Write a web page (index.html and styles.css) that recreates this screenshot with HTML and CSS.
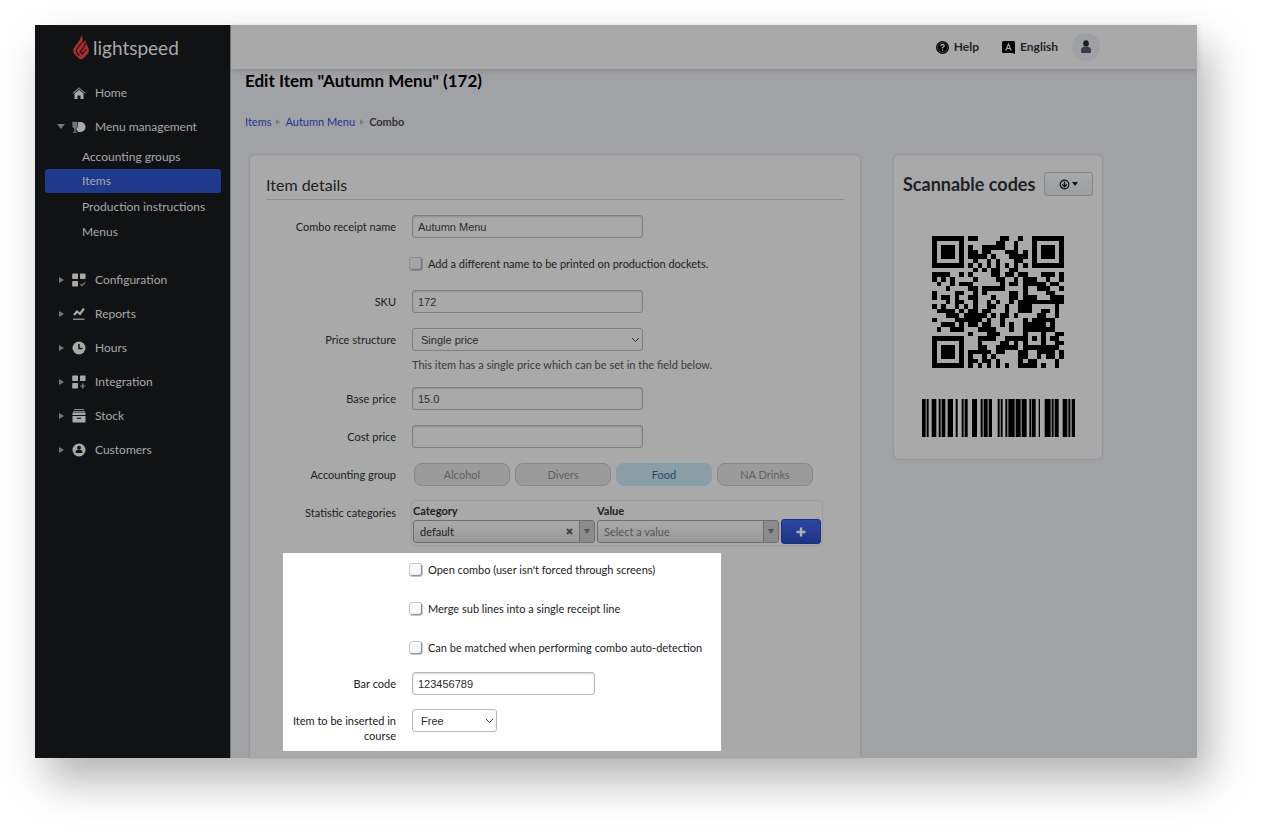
FILE: index.html
```html
<!DOCTYPE html>
<html lang="en">
<head>
<meta charset="utf-8">
<title>Edit Item "Autumn Menu" (172)</title>
<link rel="stylesheet" href="styles.css">
</head>
<body>
<div class="frame">
  <aside class="sidebar">
    <a class="logo" href="#">
      <svg width="16" height="25" viewBox="0 0 16 25"><path d="M8 0C11 4 9.500 7 7.500 9.500L12.700 5.500C13.500 8 13.300 9 14.500 11C16.500 14.500 16.300 17 14.500 19L10.500 23.200C9 24.700 7 24.700 5.500 23.200L1.500 19C-.4 16.500 -.4 14.500 1.500 12L6.300 5.500C7.600 3.800 8 2 8 0Z" fill="#a82d30"/><path d="M8.500 8L3.800 14C2.800 15.500 3 16.700 4 17.900L6.500 20.500M12.300 7.500C12.500 9.500 11.800 11 10.600 12.500L7.200 16.800L9.300 19L13 14.500" fill="none" stroke="#101214" stroke-width="1.100"/></svg>
      <span>lightspeed</span>
    </a>
    <nav>
      <a class="nav-item" href="#"><span class="caret"></span><svg class="icon" viewBox="0 0 14 14"><path d="M1 7.200L7 2L13 7.200" fill="none" stroke="#777" stroke-width="1.300"/><path d="M2.500 7.500L7 3.700L11.500 7.500V13H8.500V9.500H5.500V13H2.500Z"/></svg>Home</a>
      <a class="nav-item" href="#"><span class="caret open"></span><svg class="icon" viewBox="0 0 14 14"><path d="M6 2H7.500A5 5 0 0 1 7.500 12H6Z"/><circle cx="8.500" cy="7" r="5"/><path d="M0 1.500H5.500V7L4 8.500V11.500H5.500V13H.5V11.500H2V8.500L0 7Z" fill="#777" stroke="#101214" stroke-width=".6"/></svg>Menu management</a>
      <div class="subnav">
        <a href="#">Accounting groups</a>
        <a class="active" href="#">Items</a>
        <a href="#">Production instructions</a>
        <a href="#">Menus</a>
      </div>
      <a class="nav-item" href="#"><span class="caret"></span><svg class="icon" viewBox="0 0 14 14"><path d="M1 .5H5.500L6 1V5.500L5.500 6H.5L.2 5.500V1ZM8.500 .5H13L13.500 1V5.500L13 6H8.500L8 5.500V1ZM1 8H5.500L6 8.500V13L5.500 13.500H.5L.2 13V8.500Z"/><path d="M8.500 11L10 12.500L13 9.500" fill="none" stroke="#777" stroke-width="1.300"/></svg>Configuration</a>
      <a class="nav-item" href="#"><span class="caret"></span><svg class="icon" viewBox="0 0 14 14"><path d="M2 8L5 4.500L8 7L12 1.500" fill="none" stroke="#a9a9a9" stroke-width="2.200"/><path d="M1 11.500H12.500V13H1Z" fill="#888"/></svg>Reports</a>
      <a class="nav-item" href="#"><span class="caret"></span><svg class="icon" viewBox="0 0 14 14"><circle cx="7" cy="7" r="6.500"/><path d="M7 3V7.500H10.500" fill="none" stroke="#101214" stroke-width="1.500"/></svg>Hours</a>
      <a class="nav-item" href="#"><span class="caret"></span><svg class="icon" viewBox="0 0 14 14"><path d="M1 .5H5.500L6 1V5.500L5.500 6H.5L.2 5.500V1ZM8.500 .5H13L13.500 1V5.500L13 6H8.500L8 5.500V1ZM1 8H5.500L6 8.500V13L5.500 13.500H.5L.2 13V8.500Z"/><path d="M10.800 8.500V13.500M8.300 11H13.300" fill="none" stroke="#888" stroke-width="1.200"/></svg>Integration</a>
      <a class="nav-item" href="#"><span class="caret"></span><svg class="icon" viewBox="0 0 14 14"><path d="M2 .5H12M1 2.500H13" fill="none" stroke="#888"/><path d="M.5 3.500H13.500V6H.5ZM.5 7H13.500V13L13 13.500H1L.5 13Z"/><path d="M5 9.300H9" stroke="#101214" stroke-width="1.200"/></svg>Stock</a>
      <a class="nav-item" href="#"><span class="caret"></span><svg class="icon" viewBox="0 0 14 14"><circle cx="7" cy="7" r="6.500"/><circle cx="7" cy="4.800" r="2" fill="#101214"/><path d="M3.500 10V9Q3.500 7 5.500 7H8.500Q10.500 7 10.500 9V10Z" fill="#101214"/></svg>Customers</a>
    </nav>
  </aside>

  <main class="main">
    <header class="topbar">
      <a class="top-link" href="#"><svg width="13" height="13" viewBox="0 0 13 13"><circle cx="6.500" cy="6.500" r="6.500" fill="#000"/><circle cx="6.500" cy="6.500" r="5" fill="none" stroke="#888" stroke-width=".5"/><path d="M4.800 5.300Q4.800 3.500 6.500 3.500T8.200 5Q8.200 6 6.500 6.500V7.500" fill="none" stroke="#a9a9a9" stroke-width="1.300"/><rect x="5.800" y="8.500" width="1.400" height="1.300" fill="#a9a9a9"/></svg>Help</a>
      <a class="top-link" href="#"><svg width="13" height="13" viewBox="0 0 13 13"><path d="M1.500 0H11.500Q13 0 13 1.500V13L10.500 12H1.500Q0 12 0 10.500V1.500Q0 0 1.500 0Z"/><path d="M3.800 9.500L6.500 3L9.200 9.500M4.700 7.500H8.300" fill="none" stroke="#a9a9a9" stroke-width="1.200"/></svg>English</a>
      <button class="avatar" type="button" aria-label="Account"><svg width="12" height="14" viewBox="0 0 12 14"><ellipse cx="6" cy="3.500" rx="2.800" ry="3.200" fill="#1c2026"/><path d="M1 10.500Q1 7 4 7H8Q11 7 11 10.500V12Q11 13 10 13H2Q1 13 1 12Z" fill="#3a3d48"/></svg></button>
    </header>

    <div class="page-head">
      <h1>Edit Item "Autumn Menu" (172)</h1>
      <div class="crumbs"><a href="#">Items</a><i></i><a href="#">Autumn Menu</a><i></i><span>Combo</span></div>
    </div>

    <div class="columns">
      <form class="card details">
        <h2>Item details</h2>
        <div class="rows">
          <div class="row"><label class="lbl" for="name">Combo receipt name</label><input class="field" id="name" type="text" value="Autumn Menu"></div>
          <div class="row"><span class="lbl"></span><label class="check"><input type="checkbox">Add a different name to be printed on production dockets.</label></div>
          <div class="row"><label class="lbl" for="sku">SKU</label><input class="field" id="sku" type="text" value="172"></div>
          <div class="row"><label class="lbl" for="structure">Price structure</label>
            <div><select class="field" id="structure"><option>Single price</option></select>
            <p class="hint">This item has a single price which can be set in the field below.</p></div></div>
          <div class="row"><label class="lbl" for="base">Base price</label><input class="field" id="base" type="text" value="15.0"></div>
          <div class="row"><label class="lbl" for="cost">Cost price</label><input class="field" id="cost" type="text"></div>
          <div class="row"><span class="lbl">Accounting group</span>
            <div class="pills"><button type="button">Alcohol</button><button type="button">Divers</button><button class="on" type="button">Food</button><button type="button">NA Drinks</button></div></div>
          <div class="row"><span class="lbl">Statistic categories</span>
            <div class="stats">
              <label for="cat">Category</label><label for="val">Value</label><span></span>
              <div class="combo"><select id="cat"><option>default</option></select><button class="clear" type="button" aria-label="Clear"><svg width="7" height="7" viewBox="0 0 7 7"><path d="M1 1L6 6M6 1L1 6" stroke="#444" stroke-width="2"/></svg></button><span class="drop"></span></div>
              <div class="combo empty"><select id="val"><option>Select a value</option></select><span class="drop"></span></div>
              <button class="add" type="button" aria-label="Add"><svg width="10" height="10" viewBox="0 0 10 10"><path d="M5 .5V9.500M.5 5H9.500" stroke="#b0b0b0" stroke-width="2.400"/></svg></button>
            </div></div>
        </div>
        <div class="spotlight">
          <div class="row"><span class="lbl"></span><label class="check"><input type="checkbox">Open combo (user isn't forced through screens)</label></div>
          <div class="row"><span class="lbl"></span><label class="check"><input type="checkbox">Merge sub lines into a single receipt line</label></div>
          <div class="row"><span class="lbl"></span><label class="check"><input type="checkbox">Can be matched when performing combo auto-detection</label></div>
          <div class="row short"><label class="lbl" for="bar">Bar code</label><input class="field medium" id="bar" type="text" value="123456789"></div>
          <div class="row"><label class="lbl" for="course">Item to be inserted in course</label><select class="field small" id="course"><option>Free</option></select></div>
        </div>
      </form>

      <section class="card codes">
        <div class="codes-head"><h2>Scannable codes</h2><button type="button" aria-label="Download"><svg width="11" height="11" viewBox="0 0 11 11" fill="none" stroke="#111"><circle cx="5.500" cy="5.500" r="4.300" stroke-width="1.200"/><path d="M5.500 2.500V7.500M3.200 5.500L5.500 7.800L7.800 5.500" stroke-width="1.400"/></svg><span class="down"></span></button></div>
        <svg class="qr" id="qr" viewBox="0 0 29 29" role="img" aria-label="QR code" shape-rendering="crispEdges"></svg>
        <svg class="barcode" id="barcode" viewBox="34 0 459 113" preserveAspectRatio="none" role="img" aria-label="Bar code"></svg>
      </section>
    </div>
  </main>
</div>
<script src="codes.js"></script>
</body>
</html>
```
FILE: styles.css
```css
* { box-sizing: border-box; }
body { margin: 0; background: #fff; font: 11px/16px Lato, "Liberation Sans", sans-serif; color: #202122; }
h1, h2, p { margin: 0; }
a { color: inherit; text-decoration: none; }
button, input, select { font: inherit; color: inherit; margin: 0; }
.frame { display: grid; grid-template-columns: 196px 1fr; margin: 25px 65px 75px 35px; background: #a1a2a5; box-shadow: 12px 22px 40px rgba(0,0,0,.3); }

.sidebar { background: #101214; color: #a9a9a9; border-right: 1px solid #737476; }
.logo { display: flex; align-items: center; gap: 4px; height: 45px; padding-left: 38px; font-size: 19px; line-height: 24px; }
nav { display: flex; flex-direction: column; padding-top: 6px; }
.nav-item { display: flex; align-items: center; height: 34px; padding-left: 23px; font-size: 12px; }
.caret { width: 14px; height: 6px; }
.nav-item .caret::before { content: ""; display: block; width: 0; height: 0; border: 3px solid transparent; border-left: 5px solid #777; border-right: 0; margin-left: 1px; }
.nav-item:first-child .caret::before { display: none; }
.nav-item .open::before { border: 4px solid transparent; border-top: 5px solid #777; border-bottom: 0; margin: 0 0 0 -1px; }
.icon { width: 14px; height: 14px; margin-right: 9px; fill: #a9a9a9; }
.subnav { padding: 0 9px 19px 10px; }
.subnav a { display: flex; align-items: center; height: 25px; padding-left: 37px; border-radius: 3px; font-size: 12px; }
.subnav .active { background: #1f398d; height: 24px; margin-bottom: 1px; }

.main { min-width: 0; display: flex; flex-direction: column; }
.topbar { display: flex; align-items: center; justify-content: flex-end; height: 44px; padding-right: 97px; background: #a9a9a9; box-shadow: 0 2px 6px rgba(0,0,0,.15); }
.top-link { display: flex; align-items: center; gap: 5px; margin-right: 23px; font-size: 12px; font-weight: 700; color: #22242b; }
.avatar { display: flex; align-items: center; justify-content: center; width: 28px; height: 28px; padding: 0; border: 0; border-radius: 50%; background: #9fa0a3; }
.top-link + .avatar { margin-left: -9px; }
.page-head { padding: 0 14px; }
h1 { font-size: 17px; line-height: 24px; color: #000; }
.crumbs { display: flex; align-items: center; padding: 21px 0 25px; color: #333; }
.crumbs a { color: #1c3592; }
.crumbs span { font-weight: 700; }
.crumbs i { margin: 0 5px; border: 3px solid transparent; border-left: 4px solid #7c7d80; border-right: 0; }

.columns { display: grid; grid-template-columns: minmax(0, 1fr) 208px; gap: 34px; padding: 0 95px 0 19px; align-items: start; }
.card { background: #a9a9a9; border-radius: 5px; box-shadow: 0 0 2px rgba(0,0,0,.25); }
.details { border-radius: 5px 5px 0 0; padding: 18px 16px 7px; }
.details h2 { padding-bottom: 2px; border-bottom: 1px solid #8e8e8e; font-size: 16px; line-height: 24px; font-weight: 400; }
.rows { display: grid; gap: 15px; padding-top: 15px; }
.row { display: flex; gap: 16px; align-items: flex-start; }
.lbl { flex: none; width: 130px; text-align: right; line-height: 23px; }
.lbl:empty { height: 22px; }
.field { display: block; width: 231px; height: 23px; padding: 0 5px; border: 1px solid #7d8085; border-radius: 3px; background: #a9a9a9; box-shadow: inset 0 1px 2px rgba(0,0,0,.15); font: 11px "Liberation Sans", sans-serif; color: #2c2c2c; }
select.field { appearance: none; padding-left: 8px; box-shadow: none; background: no-repeat right 2px center url("data:image/svg+xml,%3Csvg xmlns='http://www.w3.org/2000/svg' width='9' height='6'%3E%3Cpath d='M1 1L4.5 4.5L8 1' fill='none' stroke='%23333'/%3E%3C/svg%3E"); }
.hint { margin-top: 7px; line-height: 14px; color: #3a3a3a; }
.check { display: flex; align-items: center; gap: 5px; height: 22px; margin-left: -3px; }
.check input { appearance: none; width: 14px; height: 14px; border: 1px solid #888b90; border-radius: 3px; background: #a3a4a6; box-shadow: inset -1px -1px 1px #6e7073; }
.pills { display: flex; gap: 5px; padding-left: 2px; }
.pills button { width: 96px; height: 23px; padding: 0; border: 1px solid #888; border-radius: 8px; background: #9b9b9b; color: #606060; }
.pills .on { border-color: #7fa3ad; background: #8b9ea6; color: #1e4a66; }
.stats { display: grid; grid-template-columns: 182px 182px 40px; column-gap: 2px; align-items: center; padding: 1px; border-radius: 4px; box-shadow: 0 0 2px rgba(0,0,0,.25); }
.stats label { font-weight: 700; line-height: 17px; }
.combo { display: flex; height: 23px; border: 1px solid #6d6d6d; border-radius: 3px; background: linear-gradient(#a9a9a9, #999); overflow: hidden; }
.combo select { flex: 1; min-width: 0; padding: 0 6px; border: 0; background: none; appearance: none; }
.combo.empty select { color: #555; }
.clear { display: flex; align-items: center; width: 17px; padding: 0 4px; border: 0; background: none; }
.drop { display: flex; align-items: center; justify-content: center; width: 15px; border-left: 1px solid #6d6d6d; background: #8c8c8c; }
.drop::before { content: ""; border: 3px solid transparent; border-top: 5px solid #555; border-bottom: 0; }
.add { display: flex; align-items: center; justify-content: center; height: 25px; padding: 0; border: 1px solid #1c2f7c; border-radius: 3px; background: linear-gradient(#2c47a2, #1d3483); }

.spotlight { width: 438px; max-width: 100%; margin: 8px 0 0 17px; padding: 6px 0 8px; background: #fff; }
.spotlight .row { margin-bottom: 17px; }
.spotlight .lbl { width: 113px; line-height: 15px; padding-top: 4px; }
.spotlight .row.short { margin: -4px 0 14px; }
.spotlight .row:last-child { margin: 0; }
.spotlight .field { border-color: #b4b9c0; background-color: #fff; }
.spotlight .medium { width: 183px; }
.spotlight .small { width: 85px; }
.spotlight .check input { border-color: #c4c9d0; background: #f7f9fb; box-shadow: inset -1px -1px 1px #858a90; }

.codes { display: flex; flex-direction: column; align-items: center; padding: 17px 9px 22px; }
.codes-head { display: flex; justify-content: space-between; width: 100%; }
.codes-head h2 { font-size: 18px; line-height: 24px; white-space: nowrap; }
.codes-head button { display: flex; align-items: center; justify-content: center; gap: 2px; width: 49px; height: 24px; padding: 0; border: 1px solid #82878c; border-radius: 3px; background: linear-gradient(#a8a9aa, #9b9d9f); }
.down { border: 3px solid transparent; border-top: 4px solid #111; border-bottom: 0; }
.qr { width: 132px; height: 132px; margin-top: 40px; }
.barcode { width: 153px; height: 38px; margin-top: 31px; }
```
FILE: codes.js
```js
const svg = 'http://www.w3.org/2000/svg';
function bars(target, rects) {
  const path = document.createElementNS(svg, 'path');
  path.setAttribute('d', rects.map(([x, y, w, h]) => `M${x} ${y}h${w}v${h}h${-w}z`).join(''));
  document.getElementById(target).append(path);
}
// Dark columns of each QR row, finder squares excluded.
const rows = [
  [8,9,15,16,19], [14,15,18], [8,11,12,13,14,15,18], [8,9,11,12,16,17,18,20],
  [8,9,10,11,13,17,18,19,20], [9,12,14,18,19], [8,10,12,14,16,18,20], [9,11,13,14,17,18],
  [0,1,2,3,6,8,13,14,16,17,19,20,24,25,26,28], [0,2,4,9,14,15,18,20,21,22,25,28],
  [1,4,6,7,8,15,17,18,20,21,22,23,24,26,27], [3,8,9,11,12,13,14,15,20,23,24,25,28],
  [0,5,6,9,11,17,18,20,25,26], [0,2,3,5,8,9,13,17,18,20,21,22,26,27,28],
  [3,5,6,9,12,14,17,19,20,21,22,23,24,25,26,27,28], [0,2,5,7,9,12,13,16,19,20,21,27],
  [1,2,3,4,6,8,9,11,12,16,19,20,21,24,25,27], [3,4,5,7,8,9,10,11,13,15,16,18,23,24,27],
  [0,5,6,7,8,9,10,12,15,20,22,23,24,25,26], [2,3,4,6,8,9,11,12,15,17,20,21,22,23,24,26],
  [1,4,5,6,10,11,12,13,17,20,21,22,23,24,25,26], [8,12,13,14,20,24,27,28],
  [10,11,12,13,16,17,18,19,20,22,24,26,27], [10,15,16,18,20,24,27,28],
  [10,11,14,15,16,17,18,20,21,22,23,24,25,26,27], [8,9,10,11,12,14,15,19,20,23,24,25,26,28],
  [8,11,13,19,20,23,25,26,28], [8,9,11,12,14,19,21,22,27], [8,10,12,14,16,19,20,21,22,24,27]
];
const modules = rows.flatMap((row, y) => row.map(x => [x, y, 1, 1]));
[[0, 0], [22, 0], [0, 22]].forEach(([x, y]) => modules.push(
  [x, y, 7, 1], [x, y + 6, 7, 1], [x, y + 1, 1, 5], [x + 6, y + 1, 1, 5], [x + 2, y + 2, 3, 3]));
bars('qr', modules);
bars('barcode', [[34,45],[48,54],[63,77],[84,90],[93,104],[111,127],[135,141],[153,159],[162,171],[184,199],
  [210,216],[219,231],[234,244],[261,267],[270,276],[284,290],[293,312],[315,330],[333,348],[356,362],
  [364,375],[384,388],[402,420],[423,429],[432,444],[456,470],[473,479],[483,493]].map(([a, b]) => [a, 0, b - a, 113]));
```
